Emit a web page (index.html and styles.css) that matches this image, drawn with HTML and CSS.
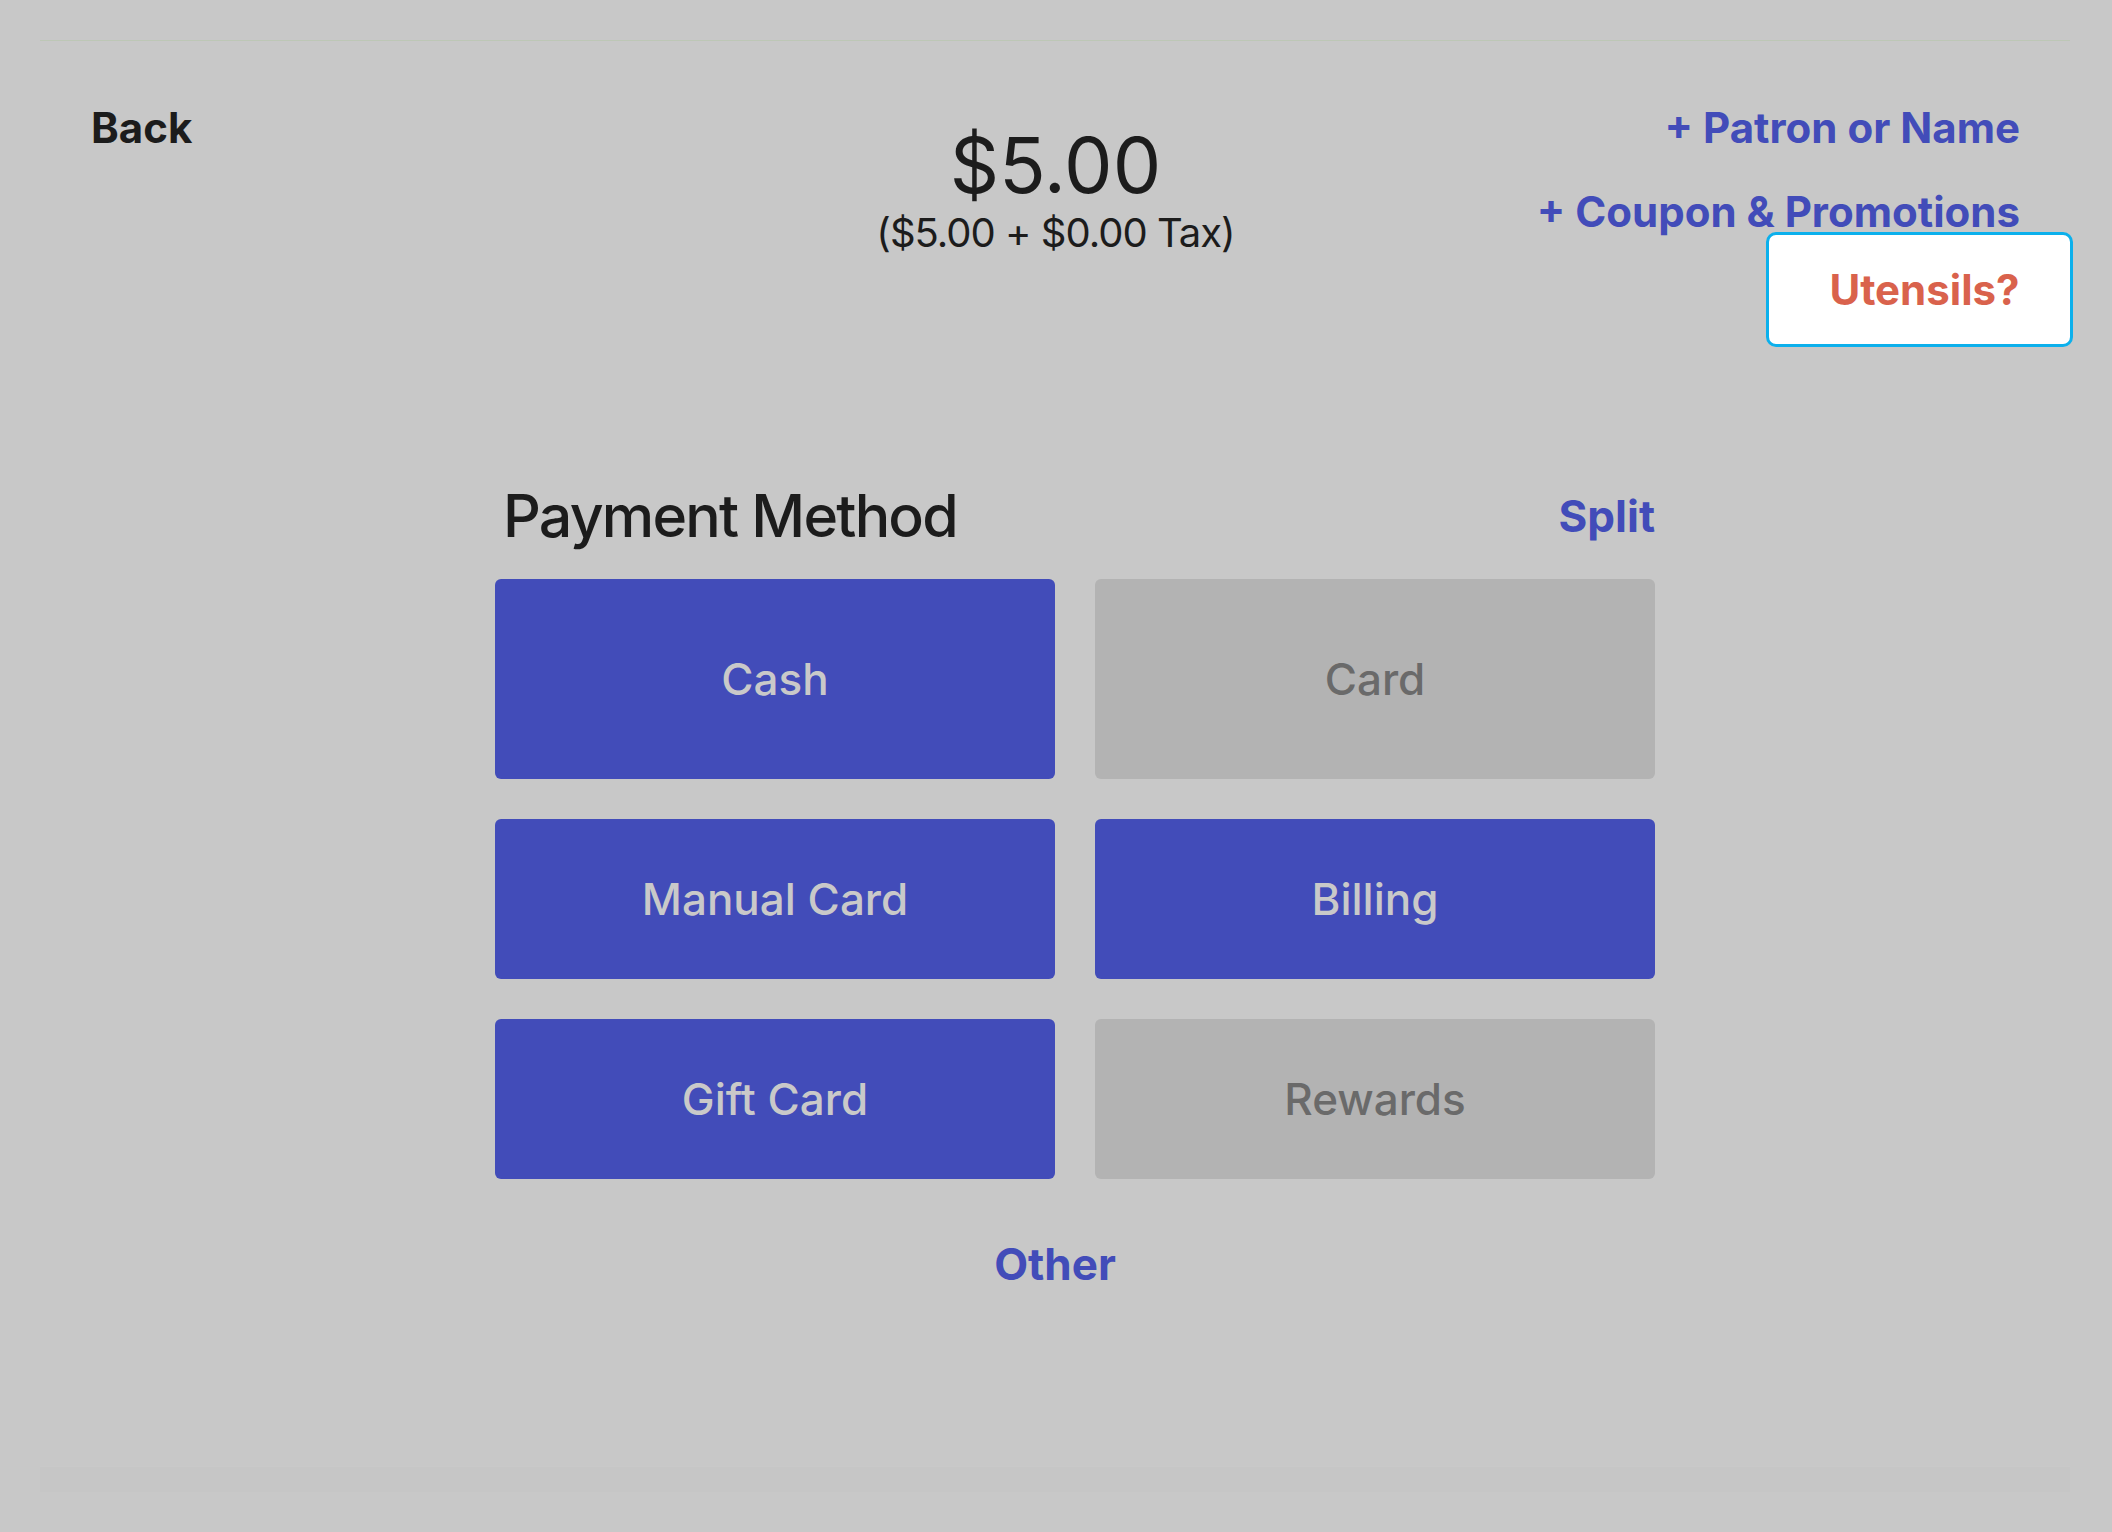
FILE: index.html
```html
<!DOCTYPE html>
<html lang="en">
<head>
  <meta charset="UTF-8" />
  <meta name="viewport" content="width=device-width, initial-scale=1.0"/>
  <title>Checkout</title>
  <link rel="stylesheet" href="styles.css">
</head>
<body>
  <div class="screen">
    <div class="topline"></div>

    <header class="header">
      <a class="back" href="#">Back</a>

      <div class="total">
        <div class="amount">$5.00</div>
        <div class="breakdown">($5.00 + $0.00 Tax)</div>
      </div>

      <div class="extras">
        <a class="link" href="#">+ Patron or Name</a>
        <a class="link" href="#">+ Coupon &amp; Promotions</a>
      </div>

      <button class="utensils">Utensils?</button>
    </header>

    <section class="payment">
      <div class="payment-head">
        <h2>Payment Method</h2>
        <a class="link split" href="#">Split</a>
      </div>

      <div class="methods">
        <button class="method tall">Cash</button>
        <button class="method tall off">Card</button>
        <button class="method">Manual Card</button>
        <button class="method">Billing</button>
        <button class="method">Gift Card</button>
        <button class="method off">Rewards</button>
      </div>

      <a class="link other" href="#">Other</a>
    </section>

    <div class="footer"></div>
  </div>
</body>
</html>
```

FILE: styles.css
```css
body {
  margin: 0;
  background: #c8c8c8;
  font-family: Inter, "Noto Sans", sans-serif;
  color: #1c1c1c;
}
a {
  text-decoration: none;
}
.screen {
  min-height: 100vh;
  margin: 0 42px 0 40px;
  display: flex;
  flex-direction: column;
}
.topline {
  margin-top: 40px;
  height: 1px;
  background: #bdc7b6;
}

/* header */
.header {
  position: relative;
  display: flex;
  justify-content: space-between;
  align-items: flex-start;
  padding: 62px 50px 0 51px;
}
.back {
  width: 400px;
  font-size: 42px;
  line-height: 50px;
  font-weight: 700;
  color: #1c1c1c;
}
.total {
  margin-top: 24px;
  text-align: center;
}
.amount {
  font-size: 77px;
  line-height: 76px;
  font-weight: 400;
}
.breakdown {
  margin-top: 6px;
  font-size: 40px;
  line-height: 48px;
  letter-spacing: -0.025em;
}
.extras {
  width: 400px;
  display: flex;
  flex-direction: column;
  align-items: flex-end;
  gap: 34px;
}
.link {
  color: #424cb9;
  font-weight: 700;
  font-size: 42px;
  line-height: 50px;
  white-space: nowrap;
}
.utensils {
  position: absolute;
  top: 191px;
  right: -3px;
  width: 307px;
  height: 115px;
  padding: 0 0 0 10px;
  background: #fff;
  border: 3px solid #0cb0ec;
  border-radius: 10px;
  font-family: inherit;
  font-size: 42px;
  font-weight: 700;
  color: #d9624c;
}

/* payment */
.payment {
  width: 1200px;
  margin: 224px auto 0;
}
.payment-head {
  margin-left: 40px;
  display: flex;
  justify-content: space-between;
  align-items: center;
  padding-left: 8px;
}
.payment-head h2 {
  margin: 0;
  font-size: 59px;
  line-height: 70px;
  font-weight: 500;
  letter-spacing: -0.03em;
}
.split {
  font-size: 44px;
}
.methods {
  margin: 28px 0 0 40px;
  display: grid;
  grid-template-columns: 560px 560px;
  grid-template-rows: 200px 160px 160px;
  gap: 40px;
}
.method {
  border: none;
  border-radius: 6px;
  background: #424cb9;
  color: #c9c9c9;
  font-family: inherit;
  font-size: 44px;
  font-weight: 500;
}
.method.off {
  background: #b3b3b3;
  color: #6a6a6a;
}
.other {
  display: block;
  margin-top: 59px;
  text-align: center;
  font-size: 44px;
  line-height: 53px;
}

.footer {
  margin-top: auto;
  margin-bottom: 40px;
  height: 25px;
  background: #c6c6c6;
  border-top: 1px solid #c9c9c9;
}
```
